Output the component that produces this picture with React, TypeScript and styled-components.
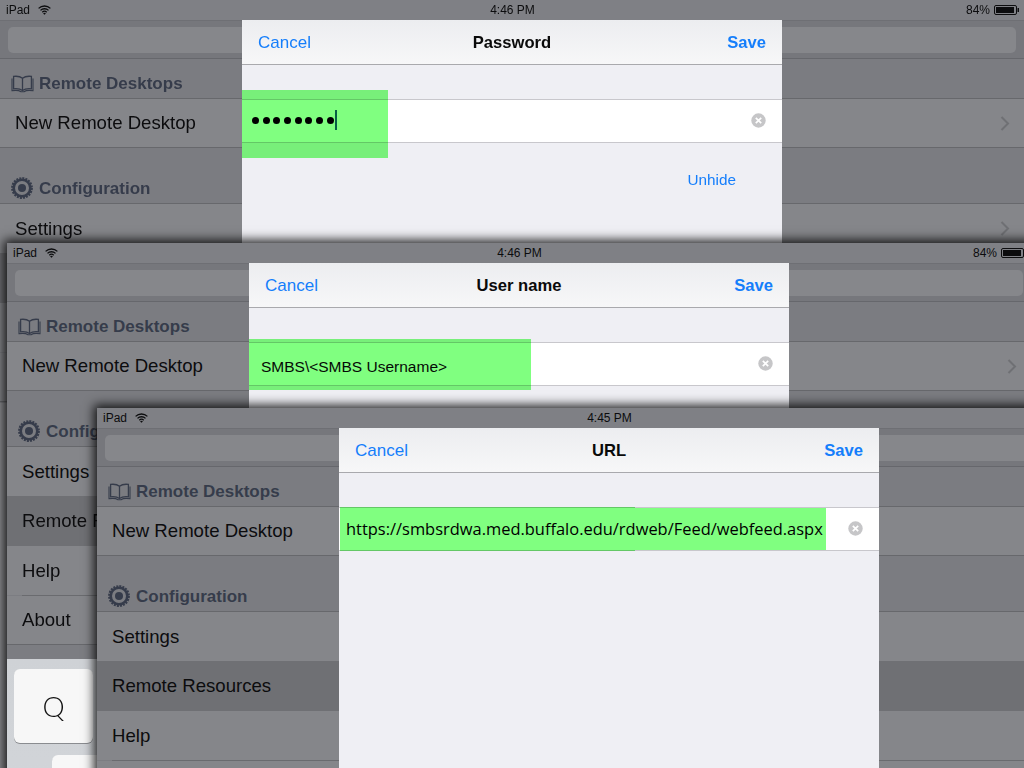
import React from "react";
import styled, { createGlobalStyle } from "styled-components";

const Global = createGlobalStyle`
  html, body {
    margin: 0;
    padding: 0;
    width: 1024px;
    height: 768px;
    overflow: hidden;
    background: #7c7d82;
  }
  body {
    font-family: "Liberation Sans", Arial, sans-serif;
  }
`;

const Canvas = styled.div`
  position: relative;
  width: 1024px;
  height: 768px;
  overflow: hidden;
`;

/* each screen is a screenshot pasted on top of the previous one */
const Screen = styled.div<{ $x: number; $y: number }>`
  position: absolute;
  left: ${p => p.$x}px;
  top: ${p => p.$y}px;
  width: 1024px;
  height: 768px;
  background: #7c7d82;
  box-shadow: 0 0 10px 3px rgba(0, 0, 0, 0.85);
  overflow: hidden;
`;

const StatusBar = styled.div`
  height: 20px;
  display: grid;
  grid-template-columns: 1fr auto 1fr;
  align-items: center;
  padding: 0 5px 0 6px;
  font-size: 12px;
  color: #0c0c0e;
  background: #7f8085;
`;

const StatusLeft = styled.div`
  display: flex;
  align-items: center;
  gap: 8px;
`;

const StatusRight = styled.div`
  display: flex;
  align-items: center;
  justify-content: flex-end;
  gap: 4px;
`;

const SearchBar = styled.div`
  height: 39px;
  padding: 6px 8px 5px;
  box-sizing: border-box;
  background: #76777c;
  border-top: 1px solid #6e6f74;
  border-bottom: 1px solid #66676c;
  display: flex;
`;

const SearchField = styled.div`
  flex: 1;
  background: #86878b;
  border-radius: 5px;
`;

const Heading = styled.div<{ $height: number }>`
  height: ${p => p.$height}px;
  box-sizing: border-box;
  padding: 0 0 4px 11px;
  display: flex;
  align-items: flex-end;
  gap: 5px;
  font-size: 17px;
  font-weight: 700;
  color: #363c4b;
  background: #7b7c81;
  border-bottom: 1px solid #67686c;
`;

const Row = styled.div<{ $selected?: boolean; $last?: boolean; $height?: number }>`
  height: ${p => p.$height ?? 49}px;
  box-sizing: border-box;
  padding: 0 15px;
  display: flex;
  align-items: center;
  justify-content: space-between;
  font-size: 18.6px;
  color: #0c0c0e;
  background: ${p => (p.$selected ? "#6f7074" : "#85868a")};
  ${p => p.$last && "border-bottom: 1px solid #67686c;"}
`;

const Inset = styled.div`
  height: 1px;
  margin-left: 15px;
  background: #6a6b6f;
`;

const Chevron = styled.svg`
  width: 10px;
  height: 15px;
  margin-right: -1px;
`;

const BookIcon = styled.svg`
  width: 23px;
  height: 18px;
  margin-bottom: 1px;
`;

const GearIcon = styled.svg`
  width: 22px;
  height: 22px;
  margin-right: 1px;
`;

const Keyboard = styled.div<{ $dimmed?: boolean }>`
  position: absolute;
  left: 0;
  right: 0;
  top: ${p => (p.$dimmed ? 403 : 416)}px;
  bottom: 0;
  background: ${p => (p.$dimmed ? "#8e8f93" : "linear-gradient(#cfd2d6, #d6d9dd)")};
`;

const Key = styled.div<{ $x: number; $y: number }>`
  position: absolute;
  left: ${p => p.$x}px;
  top: ${p => p.$y}px;
  width: 79px;
  height: 74px;
  border-radius: 6px;
  background: #f7f7f7;
  box-shadow: 0 1px 0 #8a8c90;
  display: flex;
  align-items: center;
  justify-content: center;
  font-family: Lato, "Liberation Sans", sans-serif;
  font-weight: 300;
  font-size: 28px;
  color: #111;
`;

const Modal = styled.div`
  position: absolute;
  left: 242px;
  top: 20px;
  width: 540px;
  height: 748px;
  background: #efeff4;
`;

const ModalHeader = styled.div`
  height: 45px;
  box-sizing: border-box;
  padding: 2px 16px 0;
  display: grid;
  grid-template-columns: 1fr auto 1fr;
  align-items: center;
  background: linear-gradient(#ecedf0, #f7f7f8);
  border-bottom: 1px solid #a9a9ad;
`;

const Cancel = styled.span`
  font-size: 17px;
  color: #157efb;
`;

const Title = styled.span`
  font-size: 16.6px;
  font-weight: 700;
  color: #0a0a0a;
`;

const Save = styled.span`
  justify-self: end;
  font-size: 16.6px;
  font-weight: 700;
  color: #157efb;
`;

const Field = styled.div`
  position: relative;
  margin-top: 34px;
  height: 44px;
  box-sizing: border-box;
  padding: 0 16px 2px 9px;
  display: flex;
  align-items: center;
  justify-content: space-between;
  background: #fff;
  border-top: 1px solid #c8c7cc;
  border-bottom: 1px solid #c8c7cc;
`;

/* green marker painted over the shot by whoever annotated it */
const Marker = styled.div<{ $left?: number; $top: number; $width: number; $height: number }>`
  position: absolute;
  left: ${p => p.$left ?? 0}px;
  top: ${p => p.$top}px;
  width: ${p => p.$width}px;
  height: ${p => p.$height}px;
  background: #80ff80;
  mix-blend-mode: multiply;
`;

const UserText = styled.span`
  margin: 8px 0 0 3px;
  font-size: 15.5px;
  color: #0a0a0a;
  white-space: nowrap;
`;

const UrlText = styled.span`
  margin-left: -2px;
  font-family: "Open Sans", Arial, sans-serif;
  font-size: 16.45px;
  color: #000;
  white-space: nowrap;
`;

const Dots = styled.div`
  display: flex;
  align-items: center;
  gap: 3.7px;
  margin-left: 1px;
`;

const Dot = styled.span`
  width: 7px;
  height: 7px;
  border-radius: 50%;
  background: #000;
`;

const Caret = styled.span`
  width: 2px;
  height: 20px;
  margin-left: -3px;
  background: #0d5f8a;
`;

const Unhide = styled.div`
  margin: 28px 46px 0 0;
  text-align: right;
  font-size: 15.3px;
  color: #157efb;
`;

const Wifi = () => (
  <svg width="13" height="10" viewBox="0 0 13 10">
    <path d="M.6 3.4a8.4 8.4 0 0 1 11.8 0M2.500 5.400a5.700 5.700 0 0 1 8 0M4.300 7.200a3.200 3.200 0 0 1 4.400 0" fill="none" stroke="#0c0c0e" strokeWidth="1.300" />
    <path d="M6.500 9.800 5.100 8.400a2 2 0 0 1 2.800 0z" fill="#0c0c0e" />
  </svg>
);

const Battery = () => (
  <svg width="25" height="10" viewBox="0 0 25 10">
    <rect x=".5" y=".5" width="22" height="9" rx="1.500" fill="none" stroke="#0c0c0e" />
    <rect x="2" y="2" width="18" height="6" fill="#0c0c0e" />
    <rect x="23.500" y="3" width="1.500" height="4" fill="#0c0c0e" />
  </svg>
);

const Book = () => (
  <BookIcon viewBox="0 0 23 18">
    <path d="M11.500 3.200C9.500 1.600 6 1 2.600 1.400v12.400c3.400-.4 6.900.2 8.900 1.800 2-1.600 5.500-2.200 8.900-1.800V1.400C17 1 13.500 1.600 11.500 3.200zM11.500 3.200v12.400" fill="none" stroke="#363c4b" strokeWidth="1.300" />
    <path d="M1 3.500v12.200c3.500-.6 7-.4 9 1h3c2-1.400 5.500-1.600 9-1V3.500" fill="none" stroke="#363c4b" strokeWidth="1.100" />
  </BookIcon>
);

const Gear = () => (
  <GearIcon viewBox="0 0 22 22">
    <circle cx="11" cy="11" r="8.300" fill="none" stroke="#363c4b" strokeWidth="2.600" />
    <circle cx="11" cy="11" r="9.700" fill="none" stroke="#363c4b" strokeWidth="2.400" strokeDasharray="2 1.050" />
    <circle cx="11" cy="11" r="4" fill="#363c4b" />
  </GearIcon>
);

const ClearIcon = () => (
  <svg width="15" height="15" viewBox="0 0 15 15">
    <circle cx="7.500" cy="7.500" r="7.200" fill="#c6c6c8" />
    <path d="M4.800 4.800l5.400 5.400M10.200 4.800l-5.400 5.400" stroke="#fff" strokeWidth="1.700" />
  </svg>
);

const RowArrow = () => (
  <Chevron viewBox="0 0 10 15">
    <path d="M1.500 1 8 7.500 1.500 14" fill="none" stroke="#6f7074" strokeWidth="2" />
  </Chevron>
);

type ScreenProps = {
  x: number;
  y: number;
  time: string;
  keyboard?: "full" | "dimmed";
  children: React.ReactNode;
};

const IpadScreen: React.FC<ScreenProps> = ({ x, y, time, keyboard, children }) => (
  <Screen $x={x} $y={y}>
    <StatusBar>
      <StatusLeft>
        <span>iPad</span>
        <Wifi />
      </StatusLeft>
      <span>{time}</span>
      <StatusRight>
        <span>84%</span>
        <Battery />
      </StatusRight>
    </StatusBar>
    <SearchBar>
      <SearchField />
    </SearchBar>
    <Heading $height={40}>
      <Book />
      Remote Desktops
    </Heading>
    <Row $last>
      New Remote Desktop
      <RowArrow />
    </Row>
    <Heading $height={56}>
      <Gear />
      Configuration
    </Heading>
    <Row>
      Settings
      <RowArrow />
    </Row>
    <Row $selected $height={50}>
      Remote Resources
    </Row>
    <Row>Help</Row>
    <Inset />
    <Row $last>About</Row>
    {keyboard === "dimmed" && <Keyboard $dimmed />}
    {keyboard === "full" && (
      <Keyboard>
        <Key $x={7} $y={10}>Q</Key>
        <Key $x={45} $y={96} />
      </Keyboard>
    )}
    <Modal>{children}</Modal>
  </Screen>
);

export default function App() {
  return (
    <Canvas>
      <Global />
      <IpadScreen x={0} y={0} time="4:46 PM" keyboard="dimmed">
        <ModalHeader>
          <Cancel>Cancel</Cancel>
          <Title>Password</Title>
          <Save>Save</Save>
        </ModalHeader>
        <Field>
          <Dots>
            {Array.from({ length: 8 }).map((_, i) => (
              <Dot key={i} />
            ))}
            <Caret />
          </Dots>
          <ClearIcon />
          <Marker $top={-10} $width={146} $height={68} />
        </Field>
        <Unhide>Unhide</Unhide>
      </IpadScreen>
      <IpadScreen x={7} y={243} time="4:46 PM" keyboard="full">
        <ModalHeader>
          <Cancel>Cancel</Cancel>
          <Title>User name</Title>
          <Save>Save</Save>
        </ModalHeader>
        <Field>
          <UserText>{"SMBS\\<SMBS Username>"}</UserText>
          <ClearIcon />
          <Marker $top={-4} $width={282} $height={51} />
        </Field>
      </IpadScreen>
      <IpadScreen x={97} y={408} time="4:45 PM">
        <ModalHeader>
          <Cancel>Cancel</Cancel>
          <Title>URL</Title>
          <Save>Save</Save>
        </ModalHeader>
        <Field>
          <UrlText>https://smbsrdwa.med.buffalo.edu/rdweb/Feed/webfeed.aspx</UrlText>
          <ClearIcon />
          <Marker $left={1} $top={-1} $width={295} $height={44} />
          <Marker $left={296} $top={0} $width={191} $height={42} />
        </Field>
      </IpadScreen>
    </Canvas>
  );
}
